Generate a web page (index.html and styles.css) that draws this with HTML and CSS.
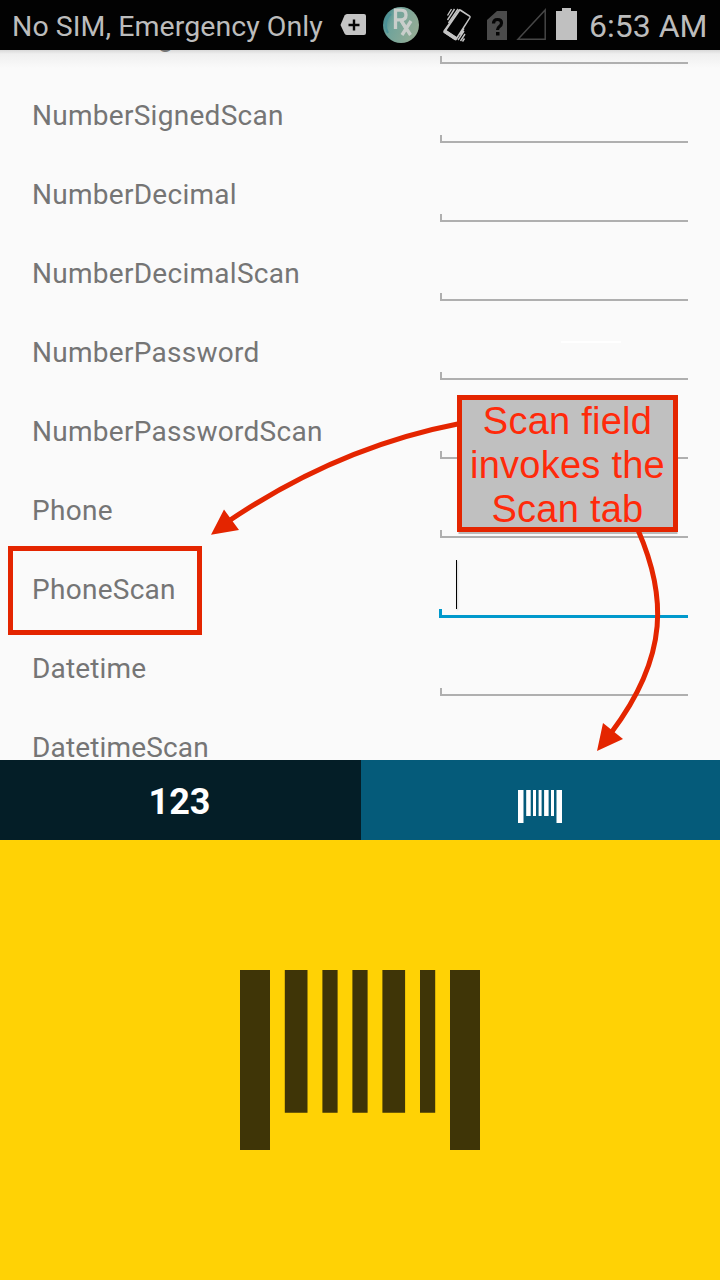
FILE: index.html
```
<!DOCTYPE html>
<html lang="en">
<head>
<meta charset="utf-8">
<title>Scan fields</title>
<link rel="stylesheet" href="styles.css">
</head>
<body>
<div class="screen">
  <header class="status">
    <span class="carrier">No SIM, Emergency Only</span>
    <svg class="status-icons" width="260" height="50" viewBox="330 0 260 50">
      <defs><linearGradient id="rx" x1="0" y1="0" x2="1" y2="0.4"><stop offset="0" stop-color="#327f88"/><stop offset="0.35" stop-color="#6fa39b"/><stop offset="1" stop-color="#91ab95"/></linearGradient></defs>
      <path fill="#c4c4c4" d="M347 14h17q2 0 2 2v17q0 2-2 2h-17q-1.500 0-2.500-1.500L340.500 25l4-9.500q1-1.500 2.500-1.500z"/>
      <path stroke="#050505" stroke-width="2.400" d="M348.500 25h11M354 19.500v11"/>
      <circle cx="401" cy="25" r="18" fill="url(#rx)"/>
      <path fill="none" stroke="#4c9298" stroke-width="2" d="M391 14a15 15 0 0 0-3 19"/>
      <g fill="none" stroke="#c9cecb" stroke-width="3.300"><path d="M395.500 29V10.200h5.500q5 0 5 4.800t-5 4.800h-5.500M400.500 19.500l6 10"/><path d="M401.500 21l9 14M411 21l-9 14"/></g>
      <path fill="#c4c4c4" fill-rule="evenodd" d="M458.500 9.500q1-1 2.500 0l9 6q1.500 1 .5 2.500L457 39.500q-1 1.500-2.500.5l-10.500-7q-1.500-1-.5-2.500zM460 11L446.500 30.500l10 6.500L469.500 17z"/>
      <path fill="#c4c4c4" d="M445.500 29.500l12 8-2.500 2.500-11.500-7.500z"/>
      <path d="M447.500 20l7-11M447.500 15.500l4-6.500M448.500 23l9.500-14M458 40l6-9M460.500 41l4.500-7M462.500 41.500l2-3M460 34.500l4-6" stroke="#c4c4c4" stroke-width="1.400"/>
      <path fill="#4b4b4b" d="M497 11h10v29h-20V20z"/>
      <path fill="none" stroke="#050505" stroke-width="3.200" d="M493.500 23.500q0-4 4-4t4 3.500q0 2-2 3.500t-2 3.500"/>
      <path fill="#050505" d="M496 32h3.500v3.500H496z"/>
      <path fill="none" stroke="#464646" stroke-width="1.500" d="M518 39.200L545.200 10v29.200z"/>
      <path fill="#c0c0c0" d="M562 8h9v3h6v29h-21V11h6z"/>
    </svg>
    <span class="clock">6:53 AM</span>
  </header>
  <main class="form">
    <div class="rows">
      <div class="row"><span class="label">NumberSigned</span><span class="field"></span></div>
      <div class="row"><span class="label">NumberSignedScan</span><span class="field"></span></div>
      <div class="row"><span class="label">NumberDecimal</span><span class="field"></span></div>
      <div class="row"><span class="label">NumberDecimalScan</span><span class="field"></span></div>
      <div class="row"><span class="label">NumberPassword</span><span class="field"></span></div>
      <div class="row"><span class="label">NumberPasswordScan</span><span class="field"></span></div>
      <div class="row"><span class="label">Phone</span><span class="field"></span></div>
      <div class="row"><span class="label">PhoneScan</span><span class="field focused"><i class="caret"></i></span></div>
      <div class="row"><span class="label tight">Datetime</span><span class="field"></span></div>
      <div class="row"><span class="label tight">DatetimeScan</span><span class="field"></span></div>
    </div>
  </main>
  <nav class="tabs">
    <div class="tab">123</div>
    <div class="tab active">
      <svg width="44" height="33" viewBox="0 0 44 33" fill="#fff"><path d="M0 0h5.500v33H0zM8.200 0h4.500v26H8.200zM15 0h3v26h-3zM20.600 0h3v26h-3zM26.100 0h4.500v26h-4.500zM33 0h3v26H33zM38.500 0H44v33h-5.500z"/></svg>
    </div>
  </nav>
  <section class="scan">
    <svg width="240" height="180" viewBox="0 0 240 180" fill="#3f3507"><path d="M0 0h30v180H0zM44.800 0h22.700v142.700H44.800zM82.400 0h15.200v142.700H82.400zM112.400 0h15.200v142.700h-15.200zM142.400 0h22.700v142.700h-22.700zM180 0h15.200v142.700H180zM210 0h30v180h-30z"/></svg>
  </section>
  <div class="glint"></div>
  <div class="highlight"></div>
  <div class="callout"><span>Scan field</span><span>invokes the</span><span>Scan tab</span></div>
  <svg class="arrows" width="720" height="1280" viewBox="0 0 720 1280">
    <g fill="none" stroke="#e42500" stroke-width="5"><path d="M460 423.500Q338 447 228 521.500"/><path d="M638 530C666 594 670 655 611 733"/></g>
    <path fill="#e42500" d="M211 534.700l13-25.200 15 20.500zM597 751l6-28 20 16z"/>
  </svg>
</div>
</body>
</html>
```
FILE: styles.css
```
body { margin: 0; font-family: Roboto, sans-serif; }
.screen { position: relative; width: 720px; height: 1280px; overflow: hidden; display: flex; flex-direction: column; background: #fafafa; }
.status { height: 50px; flex: none; display: flex; align-items: center; background: #020202; color: #bcbcbc; white-space: nowrap; }
.carrier { width: 330px; padding: 4px 0 0 12px; box-sizing: border-box; flex: none; font-size: 28.500px; letter-spacing: 0.050px; line-height: 50px; }
.status-icons { flex: none; }
.clock { font-size: 32px; line-height: 50px; padding-top: 1px; margin-left: -1px; }
.form { height: 710px; flex: none; overflow: hidden; background: linear-gradient(#d9d9d9, #efefef 4px, #fafafa 18px); }
.rows { margin-top: -65px; }
.row { height: 79px; padding: 0 32px; display: flex; justify-content: space-between; align-items: flex-end; }
.label { font-size: 28px; letter-spacing: 0.280px; line-height: 34px; padding-bottom: 10px; color: #757575; white-space: nowrap; }
.label.tight { letter-spacing: 0.150px; }
.field { width: 248px; height: 8px; box-sizing: border-box; border-left: 2px solid #afafaf; border-bottom: 2px solid #afafaf; }
.field.focused { width: 249px; height: 58px; border: 0; margin-bottom: -1px; padding-left: 17px;
  background: linear-gradient(#0099cc, #0099cc) left bottom / 100% 3px no-repeat, linear-gradient(#0099cc, #0099cc) left bottom / 3px 9px no-repeat; }
.caret { display: block; width: 1px; height: 49px; background: #000; box-shadow: 1px 1px 2px #ccc; }
.tabs { height: 80px; flex: none; display: flex; }
.tab { width: 361px; box-sizing: border-box; padding-right: 2px; background: #041e27; color: #fff; font-size: 36px; font-weight: 700; line-height: 85px; text-align: center; }
.tab.active { width: 359px; background: #055b7a; display: flex; justify-content: center; padding-top: 30px; }
.scan { flex: 1; background: #ffd205; display: flex; justify-content: center; padding-top: 130px; }
.glint { position: absolute; left: 561px; top: 341px; width: 60px; height: 2px; background: #fff; }
.highlight { position: absolute; left: 8px; top: 546px; width: 194px; height: 89px; box-sizing: border-box; border: 5px solid #e42500; }
.arrows { position: absolute; left: 0; top: 0; }
.callout { position: absolute; left: 457px; top: 395px; width: 221px; height: 137px; box-sizing: border-box; border: 5px solid #e42500; background: #c0c0c0; box-shadow: 0.500px 3px 0 -1px #bbb; display: flex; flex-direction: column; align-items: center; color: #ff2a0a; font: 38px/44px "Liberation Sans", Arial, sans-serif; letter-spacing: 0.250px; white-space: nowrap; }
.callout span { margin-top: -1px; margin-bottom: 1px; }
```
